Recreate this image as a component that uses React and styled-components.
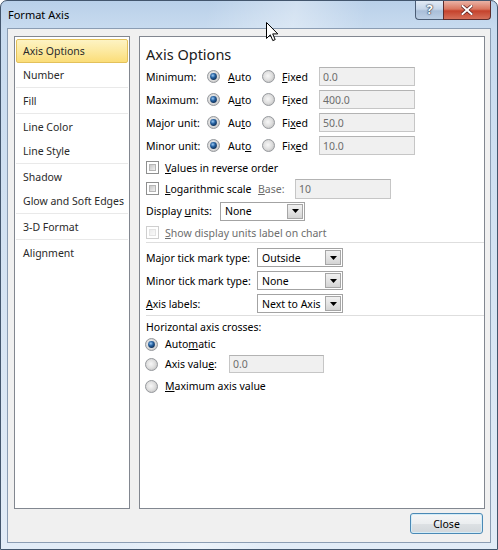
import React, { useId } from 'react';
import styled, { createGlobalStyle } from 'styled-components';

const GlobalStyle = createGlobalStyle`
  html, body {
    margin: 0;
    padding: 0;
    background: #ffffff;
  }
  body {
    font-family: "Noto Sans", "DejaVu Sans", sans-serif;
    font-size: 10.5px;
    color: #000;
  }
  * {
    box-sizing: border-box;
  }
`;

const NAV = [
  { label: 'Axis Options', active: true },
  { label: 'Number' },
  { sep: true },
  { label: 'Fill' },
  { sep: true },
  { label: 'Line Color' },
  { label: 'Line Style' },
  { sep: true },
  { label: 'Shadow' },
  { label: 'Glow and Soft Edges' },
  { sep: true },
  { label: '3-D Format' },
  { sep: true },
  { label: 'Alignment' },
];

const Radio = ({ checked, shift }) => {
  const raw = useId();
  const id = raw.replace(/[^a-zA-Z0-9]/g, '');
  return (
    <RadioSvg width="13" height="13" viewBox="0 0 13 13" $shift={shift}>
      <defs>
        <radialGradient id={`${id}f`} cx="0.45" cy="0.45" r="0.65">
          <stop offset="0" stopColor="#f7f7f7" />
          <stop offset="0.55" stopColor="#dedede" />
          <stop offset="1" stopColor="#b9b9b9" />
        </radialGradient>
        <radialGradient id={`${id}d`} cx="0.4" cy="0.35" r="0.75">
          <stop offset="0" stopColor="#9ccaf5" />
          <stop offset="0.45" stopColor="#24609f" />
          <stop offset="1" stopColor="#0a2447" />
        </radialGradient>
      </defs>
      <circle cx="6.5" cy="6.5" r="6" fill={`url(#${id}f)`} stroke="#979a9e" />
      {checked && <circle cx="6.5" cy="6.5" r="3.4" fill={`url(#${id}d)`} />}
    </RadioSvg>
  );
};

const Check = ({ disabled }) => (
  <CheckBox $disabled={disabled}>
    <CheckInner $disabled={disabled} />
  </CheckBox>
);

const Combo = ({ width, value }) => (
  <Select $w={width}>
    <SelectText>{value}</SelectText>
    <DropButton>
      <svg width="7" height="4" viewBox="0 0 7 4">
        <path d="M0 0H7L3.5 4Z" fill="#000" />
      </svg>
    </DropButton>
  </Select>
);

const Cursor = () => (
  <CursorSvg width="13" height="20" viewBox="0 0 13 20">
    <path
      d="M0.5 0.5V16.5L4.3 12.8L6.8 18.6L9.2 17.6L6.7 11.9H11.8Z"
      fill="#fff"
      stroke="#000"
      strokeWidth="1"
      strokeLinejoin="miter"
    />
  </CursorSvg>
);

const UnitRow = ({ label, auto, fixed, value }) => (
  <Row $h={23}>
    <Label $w={61}>{label}</Label>
    <Option $w={55} $gap={8}>
      <Radio checked />
      <span>{auto}</span>
    </Option>
    <Option $w={57} $gap={7}>
      <Radio />
      <span>{fixed}</span>
    </Option>
    <TextBox $w={96} $h={19}>{value}</TextBox>
  </Row>
);

const App = () => (
  <>
    <GlobalStyle />
    <Window>
      <TitleBar>
        <Title>Format Axis</Title>
        <Captions>
          <HelpButton>?</HelpButton>
          <CloseCaption>
            <svg width="12" height="10" viewBox="0 0 12 10">
              <path
                d="M1.5 1L10.5 9M10.5 1L1.5 9"
                stroke="#5a2020"
                strokeWidth="3.4"
                strokeLinecap="square"
              />
              <path
                d="M1.5 1L10.5 9M10.5 1L1.5 9"
                stroke="#fff"
                strokeWidth="2"
                strokeLinecap="square"
              />
            </svg>
          </CloseCaption>
        </Captions>
      </TitleBar>
      <Client>
        <Panels>
          <NavPanel>
            {NAV.map((item, i) =>
              item.sep ? (
                <NavSep key={i} />
              ) : (
                <NavItem key={i} $active={item.active}>
                  {item.label}
                </NavItem>
              ),
            )}
          </NavPanel>
          <OptionsPanel>
            <Heading>Axis Options</Heading>
            <UnitRow
              label="Minimum:"
              auto={<><U>A</U>uto</>}
              fixed={<><U>F</U>ixed</>}
              value="0.0"
            />
            <UnitRow
              label="Maximum:"
              auto={<>A<U>u</U>to</>}
              fixed={<>F<U>i</U>xed</>}
              value="400.0"
            />
            <UnitRow
              label="Major unit:"
              auto={<>Au<U>t</U>o</>}
              fixed={<>Fi<U>x</U>ed</>}
              value="50.0"
            />
            <UnitRow
              label="Minor unit:"
              auto={<>Aut<U>o</U></>}
              fixed={<>Fix<U>e</U>d</>}
              value="10.0"
            />
            <Row $h={21}>
              <Option $gap={6}>
                <Check />
                <span><U>V</U>alues in reverse order</span>
              </Option>
            </Row>
            <Row $h={21}>
              <Option $w={112} $gap={6}>
                <Check />
                <span><U>L</U>ogarithmic scale</span>
              </Option>
              <Label $w={37} $muted><U>B</U>ase:</Label>
              <TextBox $w={96} $h={20}>10</TextBox>
            </Row>
            <Row $h={24}>
              <Label $w={74}>Display <U>u</U>nits:</Label>
              <Combo width={85} value="None" />
            </Row>
            <Row $h={19}>
              <Option $gap={6} $muted>
                <Check disabled />
                <span><U>S</U>how display units label on chart</span>
              </Option>
            </Row>
            <Divider $after={3} />
            <Row $h={23}>
              <Label $w={111}>Major tick mark type:</Label>
              <Combo width={86} value="Outside" />
            </Row>
            <Row $h={23}>
              <Label $w={111}>Minor tick mark type:</Label>
              <Combo width={86} value="None" />
            </Row>
            <Row $h={23}>
              <Label $w={111}><U>A</U>xis labels:</Label>
              <Combo width={86} value="Next to Axis" />
            </Row>
            <Divider $after={2} />
            <Row $h={18}>
              <Label>Horizontal axis crosses:</Label>
            </Row>
            <Row $h={16}>
              <Option $gap={7}>
                <Radio checked shift />
                <span>Auto<U>m</U>atic</span>
              </Option>
            </Row>
            <Row $h={24}>
              <Option $w={83} $gap={7}>
                <Radio shift />
                <span>Axis valu<U>e</U>:</span>
              </Option>
              <TextBox $w={95} $h={18}>0.0</TextBox>
            </Row>
            <Row $h={20}>
              <Option $gap={7}>
                <Radio shift />
                <span><U>M</U>aximum axis value</span>
              </Option>
            </Row>
          </OptionsPanel>
        </Panels>
        <Footer>
          <DialogButton type="button">Close</DialogButton>
        </Footer>
      </Client>
      <Cursor />
    </Window>
  </>
);

const Window = styled.div`
  position: relative;
  width: 498px;
  height: 550px;
  display: flex;
  flex-direction: column;
  border: 1px solid #43566d;
  border-radius: 7px 7px 0 0;
  overflow: hidden;
  background:
    linear-gradient(100deg, rgba(255, 255, 255, 0) 35%, rgba(255, 255, 255, 0.35) 50%, rgba(255, 255, 255, 0) 62%),
    linear-gradient(to bottom, #b9d0e9 0px, #c8dbef 28px, #d6e4f3 55%, #e2ecf7 100%);
`;

const TitleBar = styled.div`
  height: 27px;
  display: flex;
  align-items: flex-start;
  padding-left: 7px;
`;

const Title = styled.div`
  line-height: 27px;
  font-size: 11px;
  color: #000;
`;

const Captions = styled.div`
  margin-left: auto;
  margin-right: 6px;
  display: flex;
`;

const HelpButton = styled.div`
  width: 28px;
  height: 19px;
  border: 1px solid #4b5d75;
  border-right: none;
  border-top: none;
  border-radius: 0 0 0 4px;
  background: linear-gradient(to bottom, #e1eaf5 0%, #c6d6e9 45%, #a9bed8 55%, #bccfe4 100%);
  color: #fff;
  font-size: 13px;
  font-weight: bold;
  line-height: 17px;
  text-align: center;
  text-shadow: 0 0 1px #2c3a4c, 0 0 1px #2c3a4c, 0 0 2px #2c3a4c;
`;

const CloseCaption = styled.div`
  width: 48px;
  height: 19px;
  border: 1px solid #5d2c2c;
  border-top: none;
  border-radius: 0 0 4px 0;
  background: linear-gradient(to bottom, #eab3a6 0%, #d9765f 45%, #c5422c 55%, #d5705a 100%);
  display: flex;
  align-items: center;
  justify-content: center;
`;

const Client = styled.div`
  flex: 1;
  margin: 0 6px 6px;
  border: 1px solid #8b9db3;
  background: #f0f0f0;
  padding: 7px 5px 8px 6px;
  display: flex;
  flex-direction: column;
`;

const Panels = styled.div`
  height: 473px;
  display: flex;
  gap: 9px;
`;

const NavPanel = styled.div`
  width: 116px;
  border: 1px solid #828790;
  background: #fff;
  padding: 2px 1px 0 1px;
  display: flex;
  flex-direction: column;
`;

const NavItem = styled.div`
  height: 24px;
  display: flex;
  align-items: center;
  padding-left: 6px;
  color: #2a2a2a;
  border-radius: 2px;
  border: 1px solid ${(p) => (p.$active ? '#e3c15b' : 'transparent')};
  background: ${(p) =>
    p.$active ? 'linear-gradient(to bottom, #fdf3c3 0%, #fce9a0 50%, #fbdd78 100%)' : 'transparent'};
`;

const NavSep = styled.div`
  height: 2px;
  border-top: 1px solid #e9e9e9;
`;

const OptionsPanel = styled.div`
  flex: 1;
  border: 1px solid #828790;
  background: #fff;
  padding-left: 6px;
  display: flex;
  flex-direction: column;
`;

const Heading = styled.div`
  height: 28px;
  padding-top: 6px;
  line-height: 22px;
  font-size: 14.5px;
  color: #1a1a1a;
`;

const Row = styled.div`
  height: ${(p) => p.$h}px;
  flex: none;
  display: flex;
  align-items: center;
`;

const Label = styled.div`
  width: ${(p) => (p.$w ? `${p.$w}px` : 'auto')};
  flex: none;
  color: ${(p) => (p.$muted ? '#6d6d6d' : '#000')};
  white-space: nowrap;
`;

const Option = styled.div`
  width: ${(p) => (p.$w ? `${p.$w}px` : 'auto')};
  flex: none;
  display: flex;
  align-items: center;
  gap: ${(p) => p.$gap}px;
  color: ${(p) => (p.$muted ? '#6d6d6d' : '#000')};
  white-space: nowrap;
`;

const U = styled.span`
  text-decoration: underline;
  text-underline-offset: 1px;
`;

const RadioSvg = styled.svg`
  flex: none;
  display: block;
  margin-left: ${(p) => (p.$shift ? '-1px' : '0')};
`;

const CheckBox = styled.span`
  width: 13px;
  height: 13px;
  flex: none;
  display: block;
  padding: 2px;
  border: 1px solid ${(p) => (p.$disabled ? '#cfcfcf' : '#8e8f8f')};
  background: #fff;
`;

const CheckInner = styled.span`
  display: block;
  width: 100%;
  height: 100%;
  border: 1px solid ${(p) => (p.$disabled ? '#e4e4e4' : '#b5b5b5')};
  background: ${(p) =>
    p.$disabled
      ? 'linear-gradient(135deg, #ececec, #fafafa)'
      : 'linear-gradient(135deg, #c8c8c8, #f0f0f0)'};
`;

const TextBox = styled.div`
  width: ${(p) => p.$w}px;
  height: ${(p) => p.$h}px;
  flex: none;
  border: 1px solid #c6c6c6;
  border-top-color: #b3b3b3;
  background: #f0f0f0;
  color: #6d6d6d;
  padding-left: 3px;
  display: flex;
  align-items: center;
`;

const Select = styled.div`
  width: ${(p) => p.$w}px;
  height: 19px;
  flex: none;
  border: 1px solid #a3a3a3;
  background: #fff;
  display: flex;
  align-items: center;
  padding: 1px;
`;

const SelectText = styled.span`
  flex: 1;
  padding-left: 3px;
  white-space: nowrap;
  overflow: hidden;
`;

const DropButton = styled.span`
  width: 16px;
  height: 15px;
  flex: none;
  border: 1px solid #a6a6a6;
  background: linear-gradient(to bottom, #f0f0f0 0%, #e4e4e4 50%, #d4d4d4 100%);
  display: flex;
  align-items: center;
  justify-content: center;
`;

const Divider = styled.div`
  height: 1px;
  flex: none;
  background: #dedede;
  margin-bottom: ${(p) => p.$after}px;
`;

const Footer = styled.div`
  display: flex;
  justify-content: flex-end;
  margin-top: 4px;
  padding-right: 2px;
`;

const DialogButton = styled.button`
  width: 73px;
  height: 21px;
  padding: 0;
  border: 1px solid #4a89b5;
  border-radius: 3px;
  box-shadow: inset 0 0 0 1px #d4ecf7;
  background: linear-gradient(to bottom, #f5f6f7 0%, #ebeef0 50%, #dde1e4 51%, #d2d7db 100%);
  font-family: inherit;
  font-size: 10.5px;
  color: #000;
`;

const CursorSvg = styled.svg`
  position: absolute;
  left: 265px;
  top: 21px;
`;

export default App;
